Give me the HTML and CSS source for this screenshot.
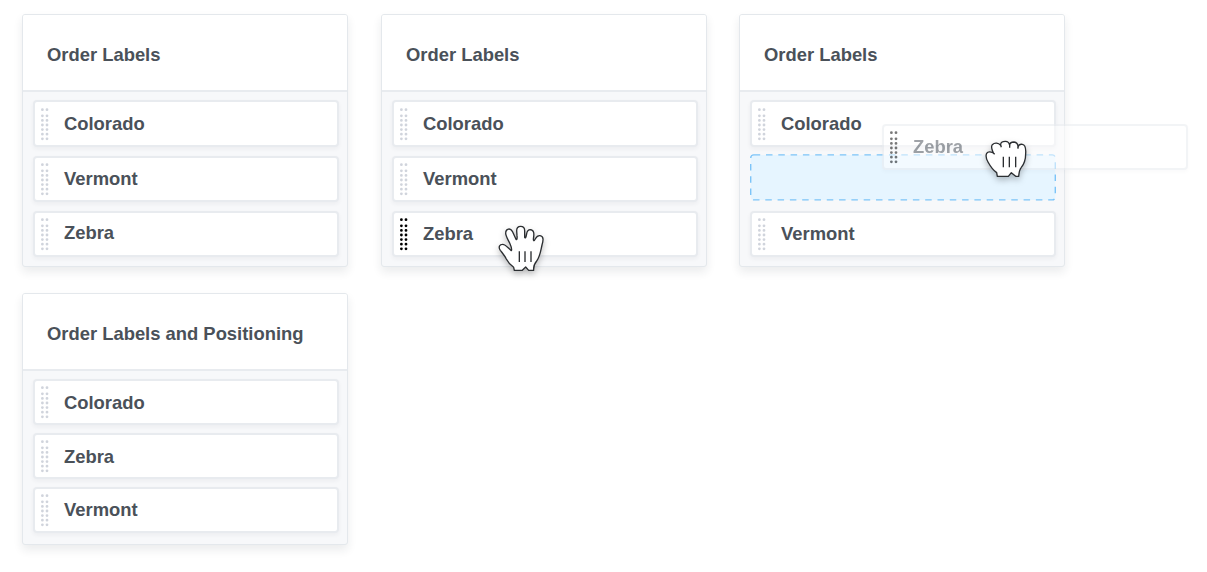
FILE: index.html
```
<!DOCTYPE html>
<html lang="en">
<head>
<meta charset="utf-8">
<title>Order Labels</title>
<link rel="stylesheet" href="styles.css">
</head>
<body>
<svg class="defs" width="0" height="0" aria-hidden="true">
  <symbol id="grip" viewBox="0 0 8 33">
    <path d="M1.4 1.7h0M6 1.7h0M1.4 7.8h0M6 7.8h0M1.4 12.4h0M6 12.4h0M1.4 17h0M6 17h0M1.4 21.6h0M6 21.6h0M1.4 26.2h0M6 26.2h0M1.4 30.8h0M6 30.8h0" fill="none" stroke="currentColor" stroke-width="2.8" stroke-linecap="round"/>
  </symbol>
</svg>
<main class="board">
  <section class="panel">
    <h2 class="title">Order Labels</h2>
    <ul class="list">
      <li class="item"><svg class="grip"><use href="#grip"/></svg><span>Colorado</span></li>
      <li class="item"><svg class="grip"><use href="#grip"/></svg><span>Vermont</span></li>
      <li class="item raised"><svg class="grip"><use href="#grip"/></svg><span>Zebra</span></li>
    </ul>
  </section>
  <section class="panel">
    <h2 class="title">Order Labels</h2>
    <ul class="list">
      <li class="item"><svg class="grip"><use href="#grip"/></svg><span>Colorado</span></li>
      <li class="item"><svg class="grip"><use href="#grip"/></svg><span>Vermont</span></li>
      <li class="item active"><svg class="grip"><use href="#grip"/></svg><span>Zebra</span></li>
    </ul>
  </section>
  <section class="panel">
    <h2 class="title">Order Labels</h2>
    <ul class="list">
      <li class="item"><svg class="grip"><use href="#grip"/></svg><span>Colorado</span></li>
      <li class="slot"><svg width="306" height="47"><rect x=".7" y=".9" width="304.6" height="45" rx="3"/></svg></li>
      <li class="item"><svg class="grip"><use href="#grip"/></svg><span>Vermont</span></li>
    </ul>
  </section>
  <section class="panel compact">
    <h2 class="title">Order Labels and Positioning</h2>
    <ul class="list">
      <li class="item"><svg class="grip"><use href="#grip"/></svg><span>Colorado</span></li>
      <li class="item"><svg class="grip"><use href="#grip"/></svg><span>Zebra</span></li>
      <li class="item"><svg class="grip"><use href="#grip"/></svg><span>Vermont</span></li>
    </ul>
  </section>
</main>
<div class="item ghost"><svg class="grip"><use href="#grip"/></svg><span>Zebra</span></div>
<svg class="hand open" viewBox="0 0 240 210">
  <path d="M103 181L101 172C90 164 83 155 79 147C75 138 67 129 61 121C54 111 59 103 68 103C77 103 84 114 94 122C97 118 93 108 89 99C84 89 76 77 77 68C78 56 91 53 97 64L108 88C111 90 112 85 111 77L110 62C110 45 134 45 134 62L134 82C136 86 138 82 139 76C141 67 140 59 151 59C163 60 162 72 161 81C159 91 161 95 164 90C168 84 170 76 180 77C192 79 190 91 186 105C181 127 180 140 170 153C164 160 160 168 161 181L146 181L137 171L127 181Z"/>
  <path class="lines" d="M118 124V156M135 124V156M153 124V156"/>
</svg>
<svg class="hand closed" viewBox="0 0 240 210">
  <path d="M82 169L80 158C67 149 60 137 54 126C49 117 46 108 50 100C54 94 62 95 70 99C67 89 61 81 67 74C74 67 85 68 92 76C91 67 97 64 106 64C115 64 118 69 119 76C119 70 124 66 132 66C141 67 144 73 144 81C146 75 151 72 157 73C168 75 168 87 167 101C167 119 163 131 154 142C148 149 147 157 146 169L137 169L124 158L115 169Z"/>
  <path class="lines" d="M119 76V83M144 81V86M92 76L94 82M70 99L74 103M100 110V142M118 110V142M137 110V142"/>
</svg>
</body>
</html>
```
FILE: styles.css
```
body {
  margin: 0;
  width: 1207px;
  height: 572px;
  overflow: hidden;
  position: relative;
  background: #fff;
  color: #4a5159;
  font: bold 18.4px/22px "Liberation Sans", Arial, sans-serif;
}

.defs { position: absolute; }

.board {
  display: grid;
  grid-template-columns: 359px 358px 326px;
  row-gap: 26px;
  padding: 14px 0 0 22px;
}

.panel {
  box-sizing: border-box;
  width: 326px;
  height: 253px;
  border: 1.5px solid #e4e8ec;
  border-radius: 3px;
  background: #f7f8fa;
  box-shadow: 0 5px 10px rgba(30, 45, 55, .09);
}

.title {
  box-sizing: border-box;
  height: 77px;
  margin: 0;
  padding: 29px 0 0 24px;
  border-bottom: 2px solid #e8ebef;
  border-radius: 2px 2px 0 0;
  background: #fff;
  font: inherit;
}

.list {
  display: flex;
  flex-direction: column;
  gap: 9px;
  margin: 0;
  padding: 8px 9px 0 10px;
  list-style: none;
}

.item {
  box-sizing: border-box;
  display: flex;
  align-items: center;
  gap: 15px;
  width: 306px;
  height: 47px;
  padding-left: 6px;
  border: 2px solid #e8ebef;
  border-radius: 4px;
  background: #fff;
  box-shadow: 0 2px 4px rgba(30, 45, 55, .05);
}

.item:nth-child(2),
.item:nth-child(3) { height: 46px; }

.slot {
  height: 47px;
  margin: -2px 0 1px;
}

.raised span { margin-top: -3px; }

.compact { height: 252px; }
.compact .list { gap: 8px; }
.compact .item { height: 46px; }
.compact .item:nth-child(-n+2) span { margin-top: 1px; }

.grip {
  width: 8px;
  height: 33px;
  margin-top: 1px;
  color: #d0d4dc;
}

.active .grip { color: #000; }

.slot svg {
  display: block;
  fill: #e6f5ff;
  stroke: #7cc4f8;
  stroke-width: 1.4;
  stroke-dasharray: 6.5 5.8;
}

.ghost {
  position: absolute;
  left: 882px;
  top: 124px;
  height: 46px;
  opacity: .52;
}

.ghost .grip { color: #000; }

.hand {
  position: absolute;
  width: 80px;
  height: 70px;
  fill: #fff;
  stroke: #2b2e31;
  stroke-width: 4;
  stroke-linejoin: round;
  filter: drop-shadow(0 3px 3px rgba(0, 0, 0, .25));
}

.hand .lines { fill: none; }

.open { left: 480px; top: 210px; }
.closed { left: 970px; top: 120px; }
```
